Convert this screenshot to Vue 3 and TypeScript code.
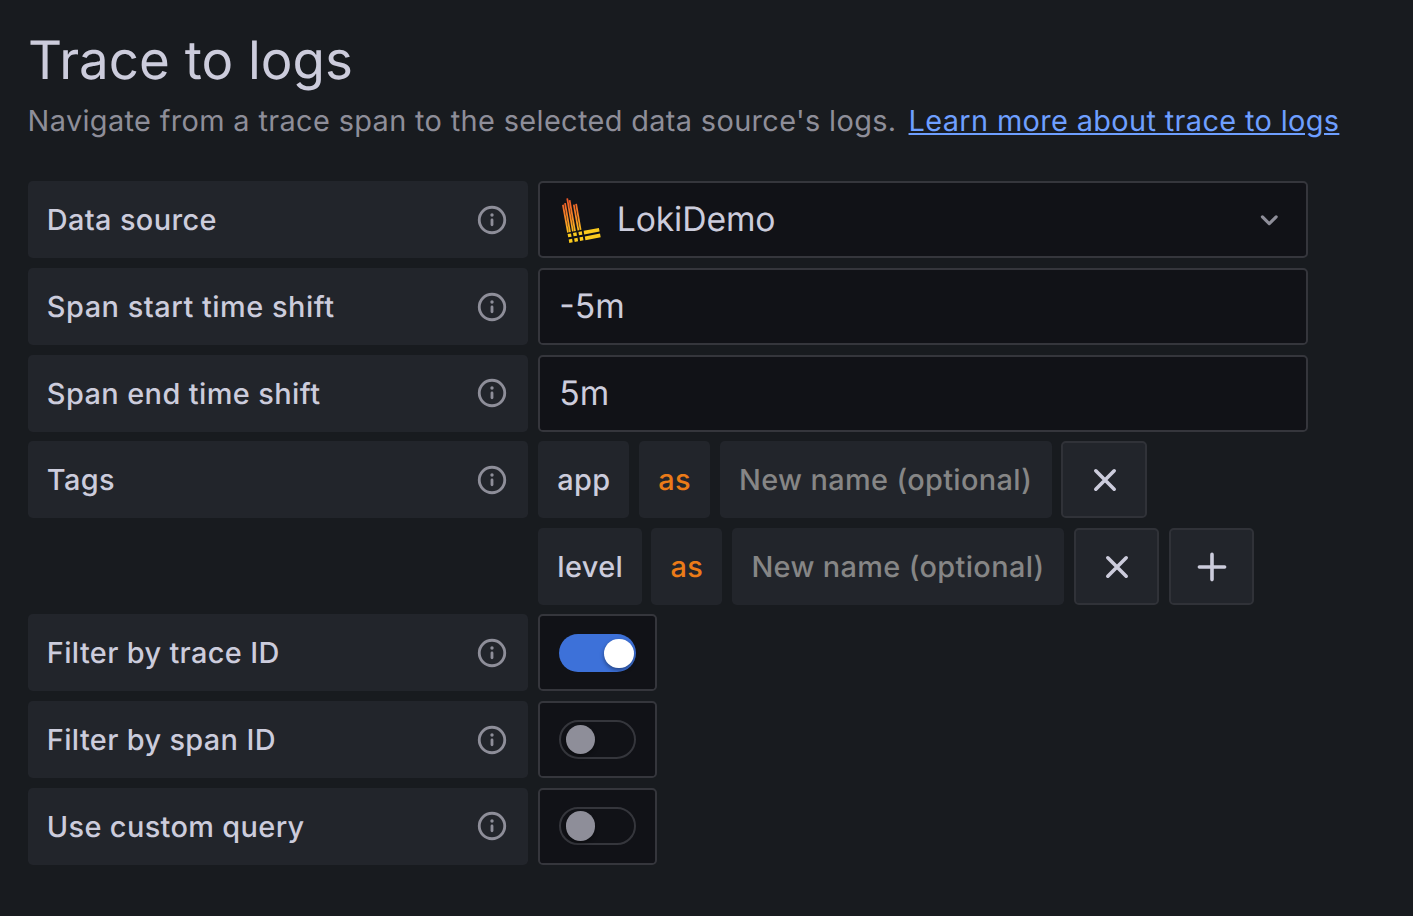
<script setup lang="ts">
interface Tag {
  key: string
  size: string
}

interface Field {
  id: string
  label: string
  kind: 'select' | 'text' | 'tags' | 'switch'
  value?: string
  on?: boolean
}

const fields: Field[] = [
  { id: 'source', label: 'Data source', kind: 'select', value: 'LokiDemo' },
  { id: 'start', label: 'Span start time shift', kind: 'text', value: '-5m' },
  { id: 'end', label: 'Span end time shift', kind: 'text', value: '5m' },
  { id: 'tags', label: 'Tags', kind: 'tags' },
  { id: 'trace', label: 'Filter by trace ID', kind: 'switch', on: true },
  { id: 'span', label: 'Filter by span ID', kind: 'switch', on: false },
  { id: 'custom', label: 'Use custom query', kind: 'switch', on: false },
]

const tags: Tag[] = [
  { key: 'app', size: 'short' },
  { key: 'level', size: 'long' },
]
</script>

<template>
  <main class="panel">
    <h3 class="title">Trace to logs</h3>
    <p class="description">
      <span class="sentence">Navigate from a trace span to the selected data source's logs.</span>
      <a class="link">Learn more about trace to logs</a>
    </p>

    <div class="fields">
      <div v-for="field in fields" :key="field.id" class="row">
        <div class="label" :class="`label-${field.id}`">
          <span>{{ field.label }}</span>
          <svg class="info" viewBox="0 0 24 24">
            <circle cx="12" cy="12" r="9" fill="none" stroke="currentColor" stroke-width="2" />
            <circle cx="12" cy="8.5" r="1.2" fill="currentColor" />
            <path d="M12 12v3.4" stroke="currentColor" stroke-width="2" stroke-linecap="round" />
          </svg>
        </div>

        <div v-if="field.kind === 'select'" class="input select">
          <svg class="loki" viewBox="0 0 42 48" preserveAspectRatio="none">
            <defs>
              <linearGradient id="flame" gradientUnits="userSpaceOnUse" x1="14" y1="0" x2="20" y2="46">
                <stop offset="0" stop-color="#f0532a" />
                <stop offset="0.45" stop-color="#f68b26" />
                <stop offset="0.8" stop-color="#fbca1c" />
                <stop offset="1" stop-color="#fcd41b" />
              </linearGradient>
            </defs>
            <g fill="none" stroke="url(#flame)" stroke-width="1.75">
              <path d="M2.9 8.4 8 35M5 6.9 10 34.7" />
              <path d="M7.2 2.2 12.9 34M9.6 3.9 15 33.7" />
              <path d="M13.8 8.3 18.4 33M16.1 7.5 20.6 32.6" />
            </g>
            <g fill="#fbcb1e">
              <path d="M7.6 36.5l3.4-.6.6 3.2-3.4.6zM13 35.5l3.4-.6.6 3.2-3.4.6zM18.4 34.5l3.4-.6.6 3.2-3.4.6z" />
              <path d="M8.7 41.7l3.4-.6.6 3.4-3.4.6zM14.1 40.7l3.4-.6.6 3.4-3.4.6zM19.5 39.7l3.4-.6.6 3.4-3.4.6z" />
              <path d="M23.6 33.4 38.9 30.6l.7 3.5L24.2 37zM24.8 38.8 40 36l.7 3.5-15.3 2.9z" />
            </g>
          </svg>
          <span class="chosen">{{ field.value }}</span>
          <svg class="chevron" viewBox="0 0 24 24">
            <path d="M17,9.17a1,1,0,0,0-1.41,0L12,12.71,8.46,9.17a1,1,0,0,0-1.41,0,1,1,0,0,0,0,1.42l4.24,4.24a1,1,0,0,0,1.42,0L17,10.59A1,1,0,0,0,17,9.17Z" fill="currentColor" />
          </svg>
        </div>

        <div v-else-if="field.kind === 'text'" class="input">{{ field.value }}</div>

        <div v-else-if="field.kind === 'tags'" class="tags">
          <div v-for="(tag, index) in tags" :key="tag.key" class="tag-row">
            <div class="segment" :class="tag.size">{{ tag.key }}</div>
            <div class="segment as">as</div>
            <div class="segment placeholder">New name (optional)</div>
            <button class="icon-button" aria-label="Remove tag">
              <svg viewBox="0 0 44 44"><path d="M12.8 12.8l18.4 18.4M31.2 12.8 12.8 31.2" /></svg>
            </button>
            <button v-if="index === tags.length - 1" class="icon-button add" aria-label="Add tag">
              <svg viewBox="0 0 44 44"><path d="M22 9.4v25.2M9.4 22h25.2" /></svg>
            </button>
          </div>
        </div>

        <div v-else class="switch-box">
          <div class="switch" :class="{ on: field.on }"><span class="knob"></span></div>
        </div>
      </div>
    </div>
  </main>
</template>

<style>
html,
body {
  margin: 0;
  background: #181b1f;
}
</style>

<style scoped>
.panel {
  box-sizing: border-box;
  width: 1413px;
  height: 916px;
  padding: 30px 0 0 28px;
  overflow: hidden;
  background: #181b1f;
  color: #ccccdc;
  font-family: Inter, "Liberation Sans", sans-serif;
  text-rendering: geometricPrecision;
}

.title {
  margin: 0;
  height: 60px;
  font-size: 52.9px;
  font-weight: 400;
  line-height: 60px;
  white-space: nowrap;
}

.description {
  display: flex;
  gap: 12px;
  height: 36px;
  margin: 13px 0 42.4px -0.4px;
  color: #8e8e99;
  font-size: 28.9px;
  line-height: 36px;
  letter-spacing: 0.36px;
  white-space: nowrap;
}

.link {
  color: #6e9fff;
  text-decoration: underline;
}

.fields {
  display: flex;
  flex-direction: column;
  gap: 9.6px;
}

.row {
  display: flex;
  align-items: flex-start;
  gap: 10px;
}

.label,
.segment {
  box-sizing: border-box;
  display: flex;
  align-items: center;
  height: 77px;
  padding: 0 19.3px;
  border-radius: 4.8px;
  background: #22252b;
  font-size: 28.9px;
  font-weight: 500;
  letter-spacing: 0.36px;
  white-space: nowrap;
}

.label {
  justify-content: space-between;
  flex: none;
  width: 500px;
  padding-left: 18.8px;
}

.label-start {
  letter-spacing: 0.52px;
}

.label-end {
  letter-spacing: 0.42px;
}

.info {
  width: 34px;
  height: 34px;
  margin-top: 0.6px;
  color: #8e8e99;
}

.input {
  box-sizing: border-box;
  display: flex;
  align-items: center;
  width: 770px;
  height: 77px;
  padding: 0 19.3px;
  border: 2px solid #35363c;
  border-radius: 4.8px;
  background: #111217;
  font-size: 33.7px;
}

.select {
  padding-bottom: 1px;
}

.loki {
  width: 42px;
  height: 50px;
  margin: 3px 0 0 0.5px;
}

.chosen {
  margin-left: 14.9px;
  letter-spacing: -0.1px;
}

.chevron {
  width: 38.5px;
  height: 38.5px;
  margin: 1px -1.8px 0 auto;
  color: #8e8e99;
}

.tags {
  display: flex;
  flex-direction: column;
  gap: 9.6px;
}

.tag-row {
  display: flex;
  gap: 9.7px;
}

.short {
  width: 91.2px;
}

.long {
  width: 103.55px;
}

.as {
  width: 71.2px;
  color: #eb7b18;
}

.placeholder {
  width: 331.8px;
  color: #868686;
}

.icon-button {
  box-sizing: border-box;
  display: flex;
  align-items: center;
  justify-content: center;
  width: 85.6px;
  height: 77px;
  padding: 0;
  border: 2px solid #303238;
  border-radius: 4.8px;
  background: #22252b;
}

.icon-button svg {
  width: 44px;
  height: 44px;
  margin: 0.8px 0 0 1px;
  fill: none;
  stroke: #ccccdc;
  stroke-width: 3.6;
  stroke-linecap: round;
}

.icon-button.add svg {
  margin-left: 0;
}

.switch-box {
  box-sizing: border-box;
  display: flex;
  align-items: center;
  justify-content: center;
  width: 119px;
  height: 77px;
  border: 2px solid #35363c;
  border-radius: 4.8px;
  background: #111217;
}

.switch {
  box-sizing: border-box;
  display: flex;
  align-items: center;
  width: 77px;
  height: 38.5px;
  padding: 0 4.8px;
  border: 2px solid #35363c;
  border-radius: 20px;
}

.knob {
  width: 29.3px;
  height: 29.3px;
  border-radius: 50%;
  background: #8e8e99;
  box-shadow: 0 2px 4px rgba(0, 0, 0, 0.4);
}

.switch.on {
  justify-content: flex-end;
  padding: 0.6px 2.3px 0;
  border: 0;
  background: #3d71d9;
}

.switch.on .knob {
  background: #fff;
}
</style>
